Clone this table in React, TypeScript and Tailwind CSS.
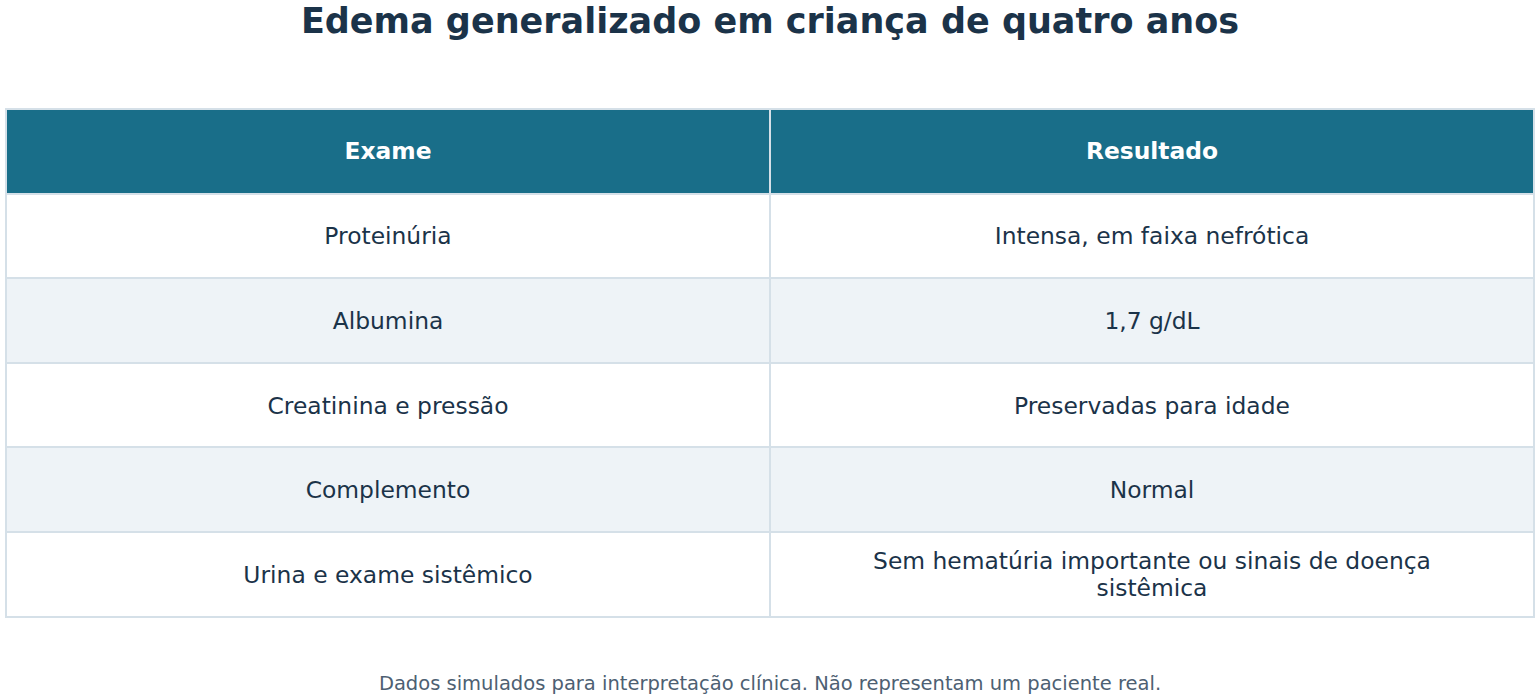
const rows: [string, string][] = [
  ["Proteinúria", "Intensa, em faixa nefrótica"],
  ["Albumina", "1,7 g/dL"],
  ["Creatinina e pressão", "Preservadas para idade"],
  ["Complemento", "Normal"],
  ["Urina e exame sistêmico", "Sem hematúria importante ou sinais de doença sistêmica"],
];

export default function App() {
  return (
    <div className="min-h-[700px] w-[1540px] bg-white px-[5px] font-['DejaVu_Sans',sans-serif] text-[#1b3349]">
      <h1 className="h-[108px] pt-0 text-center text-[35px] font-bold leading-[42px] text-[#1b3349]">
        Edema generalizado em criança de quatro anos
      </h1>
      <table className="w-full table-fixed border-collapse border-2 border-[#d5e0e8]">
        <thead>
          <tr className="h-[84.6px] bg-[#196e89] text-white">
            <th className="border-2 border-[#d5e0e8] text-[23.4px] font-bold">Exame</th>
            <th className="border-2 border-[#d5e0e8] text-[23.4px] font-bold">Resultado</th>
          </tr>
        </thead>
        <tbody>
          {rows.map(([exame, resultado], i) => (
            <tr key={exame} className={`h-[84.6px] ${i % 2 === 1 ? "bg-[#eef3f7]" : "bg-white"}`}>
              <td className="border-2 border-[#d5e0e8] px-4 pt-[2px] text-center text-[23.4px] leading-[27px]">{exame}</td>
              <td className="border-2 border-[#d5e0e8] px-4 pt-[2px] text-center text-[23.4px] leading-[27px]">
                <div className="mx-auto max-w-[620px]">{resultado}</div>
              </td>
            </tr>
          ))}
        </tbody>
      </table>
      <p className="mt-[51px] text-center text-[19.5px] text-[#4d6072]">
        Dados simulados para interpretação clínica. Não representam um paciente real.
      </p>
    </div>
  );
}
